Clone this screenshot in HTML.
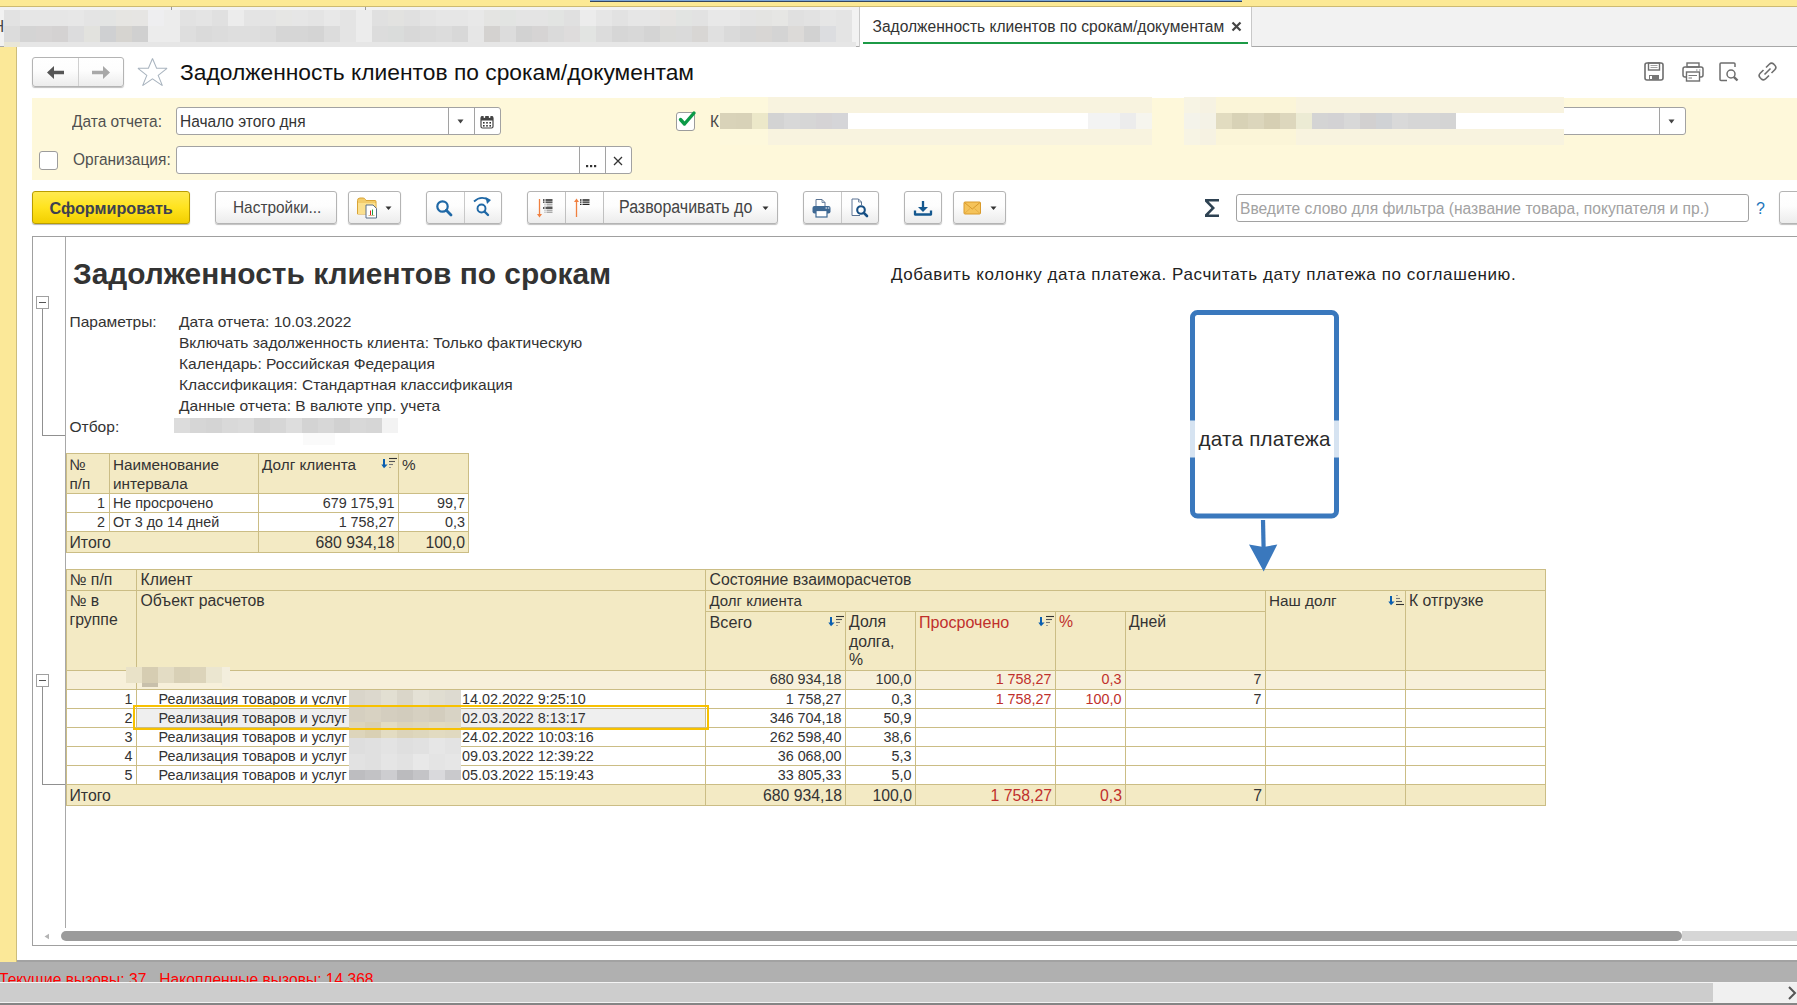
<!DOCTYPE html><html><head><meta charset="utf-8"><style>
html,body{margin:0;padding:0;}
body{width:1797px;height:1005px;position:relative;overflow:hidden;background:#fff;font-family:"Liberation Sans", sans-serif;}
.a{position:absolute;}
.t{position:absolute;white-space:nowrap;}
.btn{position:absolute;box-sizing:border-box;border:1px solid #b4b4b4;border-radius:3px;background:linear-gradient(#ffffff 0%,#fdfdfd 45%,#ececec 100%);box-shadow:0 1px 1px rgba(0,0,0,0.25);}
.inp{position:absolute;box-sizing:border-box;border:1px solid #a2a2a2;border-radius:3px;background:#fff;}
</style></head><body>
<div class="a" style="left:0px;top:0px;width:1797px;height:6px;background:#fce995;"></div>
<div class="a" style="left:0px;top:6px;width:1797px;height:1px;background:#cdba72;"></div>
<div class="a" style="left:590px;top:0px;width:652px;height:2px;background:#79a6da;border-bottom:1px solid #36465c;box-sizing:border-box;height:2px;"></div>
<div class="a" style="left:0px;top:7px;width:1797px;height:40px;background:#f2f2f2;"></div>
<div class="a" style="left:0px;top:46px;width:1797px;height:1px;background:#a8a8a8;"></div>
<div class="a" style="left:4px;top:10px;width:16px;height:16px;background:#e2e2e2;"></div>
<div class="a" style="left:4px;top:26px;width:16px;height:16px;background:#dcdcdc;"></div>
<div class="a" style="left:20px;top:10px;width:16px;height:16px;background:#e6e6e6;"></div>
<div class="a" style="left:20px;top:26px;width:16px;height:16px;background:#d4d4d4;"></div>
<div class="a" style="left:36px;top:10px;width:16px;height:16px;background:#e6e6e6;"></div>
<div class="a" style="left:36px;top:26px;width:16px;height:16px;background:#d6d4d4;"></div>
<div class="a" style="left:52px;top:10px;width:16px;height:16px;background:#e6e6e6;"></div>
<div class="a" style="left:52px;top:26px;width:16px;height:16px;background:#d4d2d2;"></div>
<div class="a" style="left:68px;top:10px;width:16px;height:16px;background:#e7e7e7;"></div>
<div class="a" style="left:68px;top:26px;width:16px;height:16px;background:#dcdcdd;"></div>
<div class="a" style="left:84px;top:10px;width:16px;height:16px;background:#e4e4e4;"></div>
<div class="a" style="left:84px;top:26px;width:16px;height:16px;background:#e2e2de;"></div>
<div class="a" style="left:100px;top:10px;width:16px;height:16px;background:#e3e4e3;"></div>
<div class="a" style="left:100px;top:26px;width:16px;height:16px;background:#cfd0d2;"></div>
<div class="a" style="left:116px;top:10px;width:16px;height:16px;background:#e6e5e2;"></div>
<div class="a" style="left:116px;top:26px;width:16px;height:16px;background:#d6d4d0;"></div>
<div class="a" style="left:132px;top:10px;width:16px;height:16px;background:#e6e5e3;"></div>
<div class="a" style="left:132px;top:26px;width:16px;height:16px;background:#d0d0d0;"></div>
<div class="a" style="left:148px;top:10px;width:16px;height:16px;background:#eeeef0;"></div>
<div class="a" style="left:148px;top:26px;width:16px;height:16px;background:#ececec;"></div>
<div class="a" style="left:164px;top:10px;width:16px;height:16px;background:#ececec;"></div>
<div class="a" style="left:164px;top:26px;width:16px;height:16px;background:#ececec;"></div>
<div class="a" style="left:180px;top:10px;width:16px;height:16px;background:#e2e2e2;"></div>
<div class="a" style="left:180px;top:26px;width:16px;height:16px;background:#dedede;"></div>
<div class="a" style="left:196px;top:10px;width:16px;height:16px;background:#e4e4e4;"></div>
<div class="a" style="left:196px;top:26px;width:16px;height:16px;background:#dadada;"></div>
<div class="a" style="left:212px;top:10px;width:16px;height:16px;background:#e0e0e0;"></div>
<div class="a" style="left:212px;top:26px;width:16px;height:16px;background:#dcdcdc;"></div>
<div class="a" style="left:228px;top:10px;width:16px;height:16px;background:#ececec;"></div>
<div class="a" style="left:228px;top:26px;width:16px;height:16px;background:#dedede;"></div>
<div class="a" style="left:244px;top:10px;width:16px;height:16px;background:#e4e4e4;"></div>
<div class="a" style="left:244px;top:26px;width:16px;height:16px;background:#dedede;"></div>
<div class="a" style="left:260px;top:10px;width:16px;height:16px;background:#e4e4e4;"></div>
<div class="a" style="left:260px;top:26px;width:16px;height:16px;background:#dcdcdc;"></div>
<div class="a" style="left:276px;top:10px;width:16px;height:16px;background:#e6e6e4;"></div>
<div class="a" style="left:276px;top:26px;width:16px;height:16px;background:#d6d6d6;"></div>
<div class="a" style="left:292px;top:10px;width:16px;height:16px;background:#e6e6e6;"></div>
<div class="a" style="left:292px;top:26px;width:16px;height:16px;background:#d6d6d6;"></div>
<div class="a" style="left:308px;top:10px;width:16px;height:16px;background:#e4e4e4;"></div>
<div class="a" style="left:308px;top:26px;width:16px;height:16px;background:#d4d4d4;"></div>
<div class="a" style="left:324px;top:10px;width:16px;height:16px;background:#e8e8e8;"></div>
<div class="a" style="left:324px;top:26px;width:16px;height:16px;background:#dcdcdc;"></div>
<div class="a" style="left:340px;top:10px;width:16px;height:16px;background:#e4e4e4;"></div>
<div class="a" style="left:340px;top:26px;width:16px;height:16px;background:#e4e4e4;"></div>
<div class="a" style="left:356px;top:10px;width:16px;height:16px;background:#ececec;"></div>
<div class="a" style="left:356px;top:26px;width:16px;height:16px;background:#ececec;"></div>
<div class="a" style="left:372px;top:10px;width:16px;height:16px;background:#e0e0e0;"></div>
<div class="a" style="left:372px;top:26px;width:16px;height:16px;background:#dcdcdc;"></div>
<div class="a" style="left:388px;top:10px;width:16px;height:16px;background:#e2e2e0;"></div>
<div class="a" style="left:388px;top:26px;width:16px;height:16px;background:#dadcdb;"></div>
<div class="a" style="left:404px;top:10px;width:16px;height:16px;background:#e0e0e0;"></div>
<div class="a" style="left:404px;top:26px;width:16px;height:16px;background:#d8d8d8;"></div>
<div class="a" style="left:420px;top:10px;width:16px;height:16px;background:#e4e4e4;"></div>
<div class="a" style="left:420px;top:26px;width:16px;height:16px;background:#dadada;"></div>
<div class="a" style="left:436px;top:10px;width:16px;height:16px;background:#e6e6e6;"></div>
<div class="a" style="left:436px;top:26px;width:16px;height:16px;background:#dcdcdc;"></div>
<div class="a" style="left:452px;top:10px;width:16px;height:16px;background:#e6e6e6;"></div>
<div class="a" style="left:452px;top:26px;width:16px;height:16px;background:#d8d8d8;"></div>
<div class="a" style="left:468px;top:10px;width:16px;height:16px;background:#e8e8e8;"></div>
<div class="a" style="left:468px;top:26px;width:16px;height:16px;background:#e6e6e6;"></div>
<div class="a" style="left:484px;top:10px;width:16px;height:16px;background:#e4e4e2;"></div>
<div class="a" style="left:484px;top:26px;width:16px;height:16px;background:#d4d2d0;"></div>
<div class="a" style="left:500px;top:10px;width:16px;height:16px;background:#e2e4e2;"></div>
<div class="a" style="left:500px;top:26px;width:16px;height:16px;background:#dcdcdc;"></div>
<div class="a" style="left:516px;top:10px;width:16px;height:16px;background:#e4e4e4;"></div>
<div class="a" style="left:516px;top:26px;width:16px;height:16px;background:#d2d2d2;"></div>
<div class="a" style="left:532px;top:10px;width:16px;height:16px;background:#e4e4e4;"></div>
<div class="a" style="left:532px;top:26px;width:16px;height:16px;background:#d6d4d4;"></div>
<div class="a" style="left:548px;top:10px;width:16px;height:16px;background:#e2e4e2;"></div>
<div class="a" style="left:548px;top:26px;width:16px;height:16px;background:#dadada;"></div>
<div class="a" style="left:564px;top:10px;width:16px;height:16px;background:#e0e0e0;"></div>
<div class="a" style="left:564px;top:26px;width:16px;height:16px;background:#dedcdc;"></div>
<div class="a" style="left:580px;top:10px;width:16px;height:16px;background:#ececec;"></div>
<div class="a" style="left:580px;top:26px;width:16px;height:16px;background:#e2e4e2;"></div>
<div class="a" style="left:596px;top:10px;width:16px;height:16px;background:#e6e6e6;"></div>
<div class="a" style="left:596px;top:26px;width:16px;height:16px;background:#dcdcdc;"></div>
<div class="a" style="left:612px;top:10px;width:16px;height:16px;background:#e2e2e2;"></div>
<div class="a" style="left:612px;top:26px;width:16px;height:16px;background:#d6d6d6;"></div>
<div class="a" style="left:628px;top:10px;width:16px;height:16px;background:#e6e6e6;"></div>
<div class="a" style="left:628px;top:26px;width:16px;height:16px;background:#d8d8d8;"></div>
<div class="a" style="left:644px;top:10px;width:16px;height:16px;background:#e6e6e6;"></div>
<div class="a" style="left:644px;top:26px;width:16px;height:16px;background:#d4d4d4;"></div>
<div class="a" style="left:660px;top:10px;width:16px;height:16px;background:#e6e4e2;"></div>
<div class="a" style="left:660px;top:26px;width:16px;height:16px;background:#dadad8;"></div>
<div class="a" style="left:676px;top:10px;width:16px;height:16px;background:#e2e4e2;"></div>
<div class="a" style="left:676px;top:26px;width:16px;height:16px;background:#dadada;"></div>
<div class="a" style="left:692px;top:10px;width:16px;height:16px;background:#e2e2e2;"></div>
<div class="a" style="left:692px;top:26px;width:16px;height:16px;background:#d8d6d4;"></div>
<div class="a" style="left:708px;top:10px;width:16px;height:16px;background:#e8e8e8;"></div>
<div class="a" style="left:708px;top:26px;width:16px;height:16px;background:#e0e0e0;"></div>
<div class="a" style="left:724px;top:10px;width:16px;height:16px;background:#e8e8e8;"></div>
<div class="a" style="left:724px;top:26px;width:16px;height:16px;background:#dadada;"></div>
<div class="a" style="left:740px;top:10px;width:16px;height:16px;background:#e4e4e4;"></div>
<div class="a" style="left:740px;top:26px;width:16px;height:16px;background:#d6d6d6;"></div>
<div class="a" style="left:756px;top:10px;width:16px;height:16px;background:#e4e4e2;"></div>
<div class="a" style="left:756px;top:26px;width:16px;height:16px;background:#d8d6d4;"></div>
<div class="a" style="left:772px;top:10px;width:16px;height:16px;background:#e6e6e4;"></div>
<div class="a" style="left:772px;top:26px;width:16px;height:16px;background:#d4d4d4;"></div>
<div class="a" style="left:788px;top:10px;width:16px;height:16px;background:#e0e0e0;"></div>
<div class="a" style="left:788px;top:26px;width:16px;height:16px;background:#dcdad8;"></div>
<div class="a" style="left:804px;top:10px;width:16px;height:16px;background:#e2e2e2;"></div>
<div class="a" style="left:804px;top:26px;width:16px;height:16px;background:#d2d2d2;"></div>
<div class="a" style="left:820px;top:10px;width:16px;height:16px;background:#e6e6e6;"></div>
<div class="a" style="left:820px;top:26px;width:16px;height:16px;background:#dcdde0;"></div>
<div class="a" style="left:836px;top:10px;width:16px;height:16px;background:#e4e4e4;"></div>
<div class="a" style="left:836px;top:26px;width:16px;height:16px;background:#e4e4e4;"></div>
<div class="a" style="left:4px;top:42px;width:852px;height:5px;background:#e6e6e6;"></div>
<div class="a" style="left:4px;top:42px;width:16px;height:5px;background:#e8e6d8;"></div>
<div class="a" style="left:171px;top:7px;width:1px;height:3px;background:#999;"></div>
<div class="a" style="left:365px;top:7px;width:1px;height:3px;background:#999;"></div>
<div class="t" style="top:15.59px;font-size:17.05px;line-height:21px;color:#444;left:-7.5px;transform:scaleX(0.9091);transform-origin:0 0;">Н</div>
<div class="a" style="left:859px;top:7px;width:393px;height:40px;background:#fff;border-left:1px solid #c8c8c8;border-right:1px solid #c8c8c8;box-sizing:border-box;"></div>
<div class="a" style="left:863px;top:42px;width:385px;height:2px;background:#1c9a46;"></div>
<div class="t" style="top:16.59px;font-size:15.60px;line-height:20px;color:#333;left:872.5px;">Задолженность клиентов по срокам/документам</div>
<svg class="a" style="left:1231px;top:21px;" width="11" height="11" viewBox="0 0 11 11"><path d="M1.5 1.5 L9.5 9.5 M9.5 1.5 L1.5 9.5" stroke="#444" stroke-width="2.2" stroke-linecap="butt"/></svg>
<div class="a" style="left:0px;top:47px;width:17px;height:916px;background:#fbe898;border-right:1px solid #cdbd7c;box-sizing:border-box;"></div>
<div class="btn" style="left:32px;top:57px;width:92px;height:30px;"></div>
<div class="a" style="left:78px;top:58px;width:1px;height:28px;background:#d0d0d0;"></div>
<svg class="a" style="left:46px;top:65px;" width="20" height="15" viewBox="0 0 20 15"><path d="M1 7.5 L8 1 L8 5.8 L18 5.8 L18 9.2 L8 9.2 L8 14 Z" fill="#555"/></svg>
<svg class="a" style="left:91px;top:65px;" width="20" height="15" viewBox="0 0 20 15"><path d="M19 7.5 L12 1 L12 5.8 L1 5.8 L1 9.2 L12 9.2 L12 14 Z" fill="#a8a8a8"/></svg>
<svg class="a" style="left:136px;top:57px;" width="32" height="30" viewBox="0 0 32 30"><path d="M16.5 1.5 L20.6 11.3 L31 11.3 L22.2 18.4 L26.4 28.6 L16.5 21.8 L6.6 28.6 L10.8 18.4 L2 11.3 L12.4 11.3 Z" fill="none" stroke="#a9b4bf" stroke-width="1.05" stroke-linejoin="miter" stroke-miterlimit="2.5"/></svg>
<div class="t" style="top:57.60px;font-size:22.80px;line-height:28px;color:#111;left:180px;">Задолженность клиентов по срокам/документам</div>
<svg class="a" style="left:1644px;top:62px;" width="21" height="19" viewBox="0 0 21 19"><rect x="1" y="1" width="18" height="17" rx="2" fill="none" stroke="#6e6e6e" stroke-width="1.6"/><rect x="4.5" y="1" width="11" height="7" fill="none" stroke="#6e6e6e" stroke-width="1.4"/><path d="M6.5 3.5 H13.5 M6.5 5.5 H13.5" stroke="#999" stroke-width="0.9"/><rect x="5" y="13" width="10" height="5" fill="#777"/><rect x="6" y="14" width="2" height="3" fill="#fff"/></svg>
<svg class="a" style="left:1682px;top:62px;" width="22" height="20" viewBox="0 0 22 20"><rect x="5" y="1" width="12" height="4" fill="none" stroke="#6e6e6e" stroke-width="1.4"/><rect x="1" y="5" width="20" height="10" rx="2" fill="none" stroke="#6e6e6e" stroke-width="1.5"/><rect x="4.5" y="10" width="13" height="9" fill="#fff" stroke="#6e6e6e" stroke-width="1.4"/><path d="M6.5 13.5 H15 M6.5 16 H10" stroke="#777" stroke-width="1"/><path d="M14 8 H15.5 M17 8 H18.5" stroke="#888" stroke-width="1"/></svg>
<svg class="a" style="left:1719px;top:62px;" width="21" height="20" viewBox="0 0 21 20"><path d="M8 18.5 H2 Q1 18.5 1 17.5 V2 Q1 1 2 1 H15 Q16 1 16 2 V5" fill="none" stroke="#6e6e6e" stroke-width="1.5"/><circle cx="12" cy="12" r="4" fill="none" stroke="#6e6e6e" stroke-width="1.5"/><path d="M14.8 14.8 L18.5 18.5" stroke="#6e6e6e" stroke-width="2.4"/></svg>
<svg class="a" style="left:1757px;top:61px;" width="21" height="21" viewBox="0 0 21 21"><path d="M9 6.5 L12.3 3.2 Q14.5 1 16.8 3.2 L17.8 4.2 Q20 6.5 17.8 8.7 L14.5 12" fill="none" stroke="#6e6e6e" stroke-width="1.6"/><path d="M12 14.5 L8.7 17.8 Q6.5 20 4.2 17.8 L3.2 16.8 Q1 14.5 3.2 12.3 L6.5 9" fill="none" stroke="#6e6e6e" stroke-width="1.6"/><path d="M7.5 13.5 L13.5 7.5" stroke="#6e6e6e" stroke-width="1.6"/></svg>
<div class="a" style="left:32px;top:98px;width:1765px;height:82px;background:#fef8da;"></div>
<div class="t" style="top:110.59px;font-size:17.05px;line-height:21px;color:#505050;left:72px;transform:scaleX(0.9091);transform-origin:0 0;">Дата отчета:</div>
<div class="inp" style="left:176px;top:107px;width:325px;height:28px;"></div>
<div class="a" style="left:448px;top:108px;width:1px;height:26px;background:#a2a2a2;"></div>
<div class="a" style="left:474px;top:108px;width:1px;height:26px;background:#a2a2a2;"></div>
<div class="t" style="top:110.59px;font-size:17.05px;line-height:21px;color:#333;left:180px;transform:scaleX(0.9091);transform-origin:0 0;">Начало этого дня</div>
<svg class="a" style="left:457px;top:119px;" width="8" height="5" viewBox="0 0 8 5"><path d="M0.5 0.5 H6.5 L3.5 4.5 Z" fill="#444"/></svg>
<svg class="a" style="left:480px;top:114px;" width="14" height="15" viewBox="0 0 14 15"><rect x="1" y="2.5" width="12" height="11.5" rx="1.5" fill="#fff" stroke="#444" stroke-width="1.2"/><rect x="1" y="2.5" width="12" height="4" fill="#444"/><rect x="3.6" y="1" width="1.6" height="3" rx="0.8" fill="#fff"/><rect x="8.8" y="1" width="1.6" height="3" rx="0.8" fill="#fff"/><g fill="#333"><rect x="3" y="8" width="1.6" height="1.6"/><rect x="6.2" y="8" width="1.6" height="1.6"/><rect x="9.4" y="8" width="1.6" height="1.6"/><rect x="3" y="11" width="1.6" height="1.6"/><rect x="6.2" y="11" width="1.6" height="1.6"/><rect x="9.4" y="11" width="1.6" height="1.6"/></g></svg>
<div class="inp" style="left:39px;top:151px;width:19px;height:19px;border-radius:3px;border-color:#9c9c9c;"></div>
<div class="t" style="top:149.09px;font-size:17.05px;line-height:21px;color:#505050;left:72.5px;transform:scaleX(0.9091);transform-origin:0 0;">Организация:</div>
<div class="inp" style="left:176px;top:146px;width:456px;height:28px;"></div>
<div class="a" style="left:579px;top:147px;width:1px;height:26px;background:#a2a2a2;"></div>
<div class="a" style="left:605px;top:147px;width:1px;height:26px;background:#a2a2a2;"></div>
<svg class="a" style="left:585px;top:164px;" width="14" height="4" viewBox="0 0 14 4"><rect x="1" y="1" width="2.2" height="2.2" fill="#333"/><rect x="5" y="1" width="2.2" height="2.2" fill="#333"/><rect x="9" y="1" width="2.2" height="2.2" fill="#333"/></svg>
<svg class="a" style="left:612px;top:155px;" width="12" height="12" viewBox="0 0 12 12"><path d="M2 2 L10 10 M10 2 L2 10" stroke="#333" stroke-width="1.3"/></svg>
<div class="inp" style="left:676px;top:112px;width:19px;height:19px;border-radius:3px;border-color:#9c9c9c;"></div>
<svg class="a" style="left:677px;top:109px;" width="20" height="18" viewBox="0 0 20 18"><path d="M3.5 10.5 L7.5 15 L17 4" fill="none" stroke="#0b9a47" stroke-width="3.4" stroke-linecap="round" stroke-linejoin="round"/></svg>
<div class="t" style="top:110.59px;font-size:17.05px;line-height:21px;color:#4a4a4a;left:709.5px;transform:scaleX(0.9091);transform-origin:0 0;">К</div>
<div class="inp" style="left:1400px;top:107px;width:286px;height:28px;"></div>
<div class="a" style="left:1659px;top:108px;width:1px;height:26px;background:#a2a2a2;"></div>
<svg class="a" style="left:1668px;top:119px;" width="8" height="5" viewBox="0 0 8 5"><path d="M0.5 0.5 H6.5 L3.5 4.5 Z" fill="#444"/></svg>
<div class="a" style="left:720px;top:97px;width:16px;height:16px;background:#fdf8dc;"></div>
<div class="a" style="left:736px;top:97px;width:16px;height:16px;background:#fdf8dc;"></div>
<div class="a" style="left:752px;top:97px;width:16px;height:16px;background:#fdf8dc;"></div>
<div class="a" style="left:768px;top:97px;width:16px;height:16px;background:#f8f3df;"></div>
<div class="a" style="left:784px;top:97px;width:16px;height:16px;background:#f8f3df;"></div>
<div class="a" style="left:800px;top:97px;width:16px;height:16px;background:#f8f3df;"></div>
<div class="a" style="left:816px;top:97px;width:16px;height:16px;background:#f8f3df;"></div>
<div class="a" style="left:832px;top:97px;width:16px;height:16px;background:#f8f3df;"></div>
<div class="a" style="left:848px;top:97px;width:16px;height:16px;background:#f8f3df;"></div>
<div class="a" style="left:864px;top:97px;width:16px;height:16px;background:#f8f3df;"></div>
<div class="a" style="left:880px;top:97px;width:16px;height:16px;background:#f8f3df;"></div>
<div class="a" style="left:896px;top:97px;width:16px;height:16px;background:#f8f3df;"></div>
<div class="a" style="left:912px;top:97px;width:16px;height:16px;background:#f8f3df;"></div>
<div class="a" style="left:928px;top:97px;width:16px;height:16px;background:#f8f3df;"></div>
<div class="a" style="left:944px;top:97px;width:16px;height:16px;background:#f8f3df;"></div>
<div class="a" style="left:960px;top:97px;width:16px;height:16px;background:#f8f3df;"></div>
<div class="a" style="left:976px;top:97px;width:16px;height:16px;background:#f8f3df;"></div>
<div class="a" style="left:992px;top:97px;width:16px;height:16px;background:#f8f3df;"></div>
<div class="a" style="left:1008px;top:97px;width:16px;height:16px;background:#f8f3df;"></div>
<div class="a" style="left:1024px;top:97px;width:16px;height:16px;background:#f8f3df;"></div>
<div class="a" style="left:1040px;top:97px;width:16px;height:16px;background:#f8f3df;"></div>
<div class="a" style="left:1056px;top:97px;width:16px;height:16px;background:#f8f3df;"></div>
<div class="a" style="left:1072px;top:97px;width:16px;height:16px;background:#f8f3df;"></div>
<div class="a" style="left:1088px;top:97px;width:16px;height:16px;background:#f8f3df;"></div>
<div class="a" style="left:1104px;top:97px;width:16px;height:16px;background:#f8f3df;"></div>
<div class="a" style="left:1120px;top:97px;width:16px;height:16px;background:#f8f3df;"></div>
<div class="a" style="left:1136px;top:97px;width:16px;height:16px;background:#f8f3df;"></div>
<div class="a" style="left:720px;top:129px;width:16px;height:16px;background:#fdf8dc;"></div>
<div class="a" style="left:736px;top:129px;width:16px;height:16px;background:#fdf8dc;"></div>
<div class="a" style="left:752px;top:129px;width:16px;height:16px;background:#fdf8dc;"></div>
<div class="a" style="left:768px;top:129px;width:16px;height:16px;background:#f8f3df;"></div>
<div class="a" style="left:784px;top:129px;width:16px;height:16px;background:#f8f3df;"></div>
<div class="a" style="left:800px;top:129px;width:16px;height:16px;background:#f8f3df;"></div>
<div class="a" style="left:816px;top:129px;width:16px;height:16px;background:#f8f3df;"></div>
<div class="a" style="left:832px;top:129px;width:16px;height:16px;background:#f8f3df;"></div>
<div class="a" style="left:848px;top:129px;width:16px;height:16px;background:#f8f3df;"></div>
<div class="a" style="left:864px;top:129px;width:16px;height:16px;background:#f8f3df;"></div>
<div class="a" style="left:880px;top:129px;width:16px;height:16px;background:#f8f3df;"></div>
<div class="a" style="left:896px;top:129px;width:16px;height:16px;background:#f8f3df;"></div>
<div class="a" style="left:912px;top:129px;width:16px;height:16px;background:#f8f3df;"></div>
<div class="a" style="left:928px;top:129px;width:16px;height:16px;background:#f8f3df;"></div>
<div class="a" style="left:944px;top:129px;width:16px;height:16px;background:#f8f3df;"></div>
<div class="a" style="left:960px;top:129px;width:16px;height:16px;background:#f8f3df;"></div>
<div class="a" style="left:976px;top:129px;width:16px;height:16px;background:#f8f3df;"></div>
<div class="a" style="left:992px;top:129px;width:16px;height:16px;background:#f8f3df;"></div>
<div class="a" style="left:1008px;top:129px;width:16px;height:16px;background:#f8f3df;"></div>
<div class="a" style="left:1024px;top:129px;width:16px;height:16px;background:#f8f3df;"></div>
<div class="a" style="left:1040px;top:129px;width:16px;height:16px;background:#f8f3df;"></div>
<div class="a" style="left:1056px;top:129px;width:16px;height:16px;background:#f8f3df;"></div>
<div class="a" style="left:1072px;top:129px;width:16px;height:16px;background:#f8f3df;"></div>
<div class="a" style="left:1088px;top:129px;width:16px;height:16px;background:#f8f3df;"></div>
<div class="a" style="left:1104px;top:129px;width:16px;height:16px;background:#f8f3df;"></div>
<div class="a" style="left:1120px;top:129px;width:16px;height:16px;background:#f8f3df;"></div>
<div class="a" style="left:1136px;top:129px;width:16px;height:16px;background:#f8f3df;"></div>
<div class="a" style="left:720px;top:113px;width:16px;height:16px;background:#d9d3b9;"></div>
<div class="a" style="left:736px;top:113px;width:16px;height:16px;background:#d8d2b8;"></div>
<div class="a" style="left:752px;top:113px;width:16px;height:16px;background:#ece8c9;"></div>
<div class="a" style="left:768px;top:113px;width:16px;height:16px;background:#d3d3d3;"></div>
<div class="a" style="left:784px;top:113px;width:16px;height:16px;background:#d8d8d8;"></div>
<div class="a" style="left:800px;top:113px;width:16px;height:16px;background:#d6d6d6;"></div>
<div class="a" style="left:816px;top:113px;width:16px;height:16px;background:#d5d3d5;"></div>
<div class="a" style="left:832px;top:113px;width:16px;height:16px;background:#d5d5d8;"></div>
<div class="a" style="left:848px;top:113px;width:16px;height:16px;background:#ffffff;"></div>
<div class="a" style="left:864px;top:113px;width:16px;height:16px;background:#ffffff;"></div>
<div class="a" style="left:880px;top:113px;width:16px;height:16px;background:#ffffff;"></div>
<div class="a" style="left:896px;top:113px;width:16px;height:16px;background:#ffffff;"></div>
<div class="a" style="left:912px;top:113px;width:16px;height:16px;background:#ffffff;"></div>
<div class="a" style="left:928px;top:113px;width:16px;height:16px;background:#ffffff;"></div>
<div class="a" style="left:944px;top:113px;width:16px;height:16px;background:#ffffff;"></div>
<div class="a" style="left:960px;top:113px;width:16px;height:16px;background:#ffffff;"></div>
<div class="a" style="left:976px;top:113px;width:16px;height:16px;background:#ffffff;"></div>
<div class="a" style="left:992px;top:113px;width:16px;height:16px;background:#ffffff;"></div>
<div class="a" style="left:1008px;top:113px;width:16px;height:16px;background:#ffffff;"></div>
<div class="a" style="left:1024px;top:113px;width:16px;height:16px;background:#ffffff;"></div>
<div class="a" style="left:1040px;top:113px;width:16px;height:16px;background:#ffffff;"></div>
<div class="a" style="left:1056px;top:113px;width:16px;height:16px;background:#ffffff;"></div>
<div class="a" style="left:1072px;top:113px;width:16px;height:16px;background:#ffffff;"></div>
<div class="a" style="left:1088px;top:113px;width:16px;height:16px;background:#f3f3f3;"></div>
<div class="a" style="left:1104px;top:113px;width:16px;height:16px;background:#f3f3f3;"></div>
<div class="a" style="left:1120px;top:113px;width:16px;height:16px;background:#ececec;"></div>
<div class="a" style="left:1136px;top:113px;width:16px;height:16px;background:#f6f5ee;"></div>
<div class="a" style="left:1184px;top:97px;width:16px;height:16px;background:#f7f4e4;"></div>
<div class="a" style="left:1200px;top:97px;width:16px;height:16px;background:#f6f2e2;"></div>
<div class="a" style="left:1216px;top:97px;width:16px;height:16px;background:#fbf5d8;"></div>
<div class="a" style="left:1232px;top:97px;width:16px;height:16px;background:#fbf5d8;"></div>
<div class="a" style="left:1248px;top:97px;width:16px;height:16px;background:#fbf5d8;"></div>
<div class="a" style="left:1264px;top:97px;width:16px;height:16px;background:#fbf5d8;"></div>
<div class="a" style="left:1280px;top:97px;width:16px;height:16px;background:#fbf5d8;"></div>
<div class="a" style="left:1296px;top:97px;width:16px;height:16px;background:#f8f3df;"></div>
<div class="a" style="left:1312px;top:97px;width:16px;height:16px;background:#f8f3df;"></div>
<div class="a" style="left:1328px;top:97px;width:16px;height:16px;background:#f8f3df;"></div>
<div class="a" style="left:1344px;top:97px;width:16px;height:16px;background:#f8f3df;"></div>
<div class="a" style="left:1360px;top:97px;width:16px;height:16px;background:#f8f3df;"></div>
<div class="a" style="left:1376px;top:97px;width:16px;height:16px;background:#f8f3df;"></div>
<div class="a" style="left:1392px;top:97px;width:16px;height:16px;background:#f8f3df;"></div>
<div class="a" style="left:1408px;top:97px;width:16px;height:16px;background:#f8f3df;"></div>
<div class="a" style="left:1424px;top:97px;width:16px;height:16px;background:#f8f3df;"></div>
<div class="a" style="left:1440px;top:97px;width:16px;height:16px;background:#f8f3df;"></div>
<div class="a" style="left:1456px;top:97px;width:16px;height:16px;background:#f8f3df;"></div>
<div class="a" style="left:1472px;top:97px;width:16px;height:16px;background:#f8f3df;"></div>
<div class="a" style="left:1488px;top:97px;width:16px;height:16px;background:#f8f3df;"></div>
<div class="a" style="left:1504px;top:97px;width:16px;height:16px;background:#f8f3df;"></div>
<div class="a" style="left:1520px;top:97px;width:16px;height:16px;background:#f8f3df;"></div>
<div class="a" style="left:1536px;top:97px;width:16px;height:16px;background:#f8f3df;"></div>
<div class="a" style="left:1552px;top:97px;width:12px;height:16px;background:#f8f3df;"></div>
<div class="a" style="left:1184px;top:129px;width:16px;height:16px;background:#f7f4e4;"></div>
<div class="a" style="left:1200px;top:129px;width:16px;height:16px;background:#f6f2e2;"></div>
<div class="a" style="left:1216px;top:129px;width:16px;height:16px;background:#fbf5d8;"></div>
<div class="a" style="left:1232px;top:129px;width:16px;height:16px;background:#fbf5d8;"></div>
<div class="a" style="left:1248px;top:129px;width:16px;height:16px;background:#fbf5d8;"></div>
<div class="a" style="left:1264px;top:129px;width:16px;height:16px;background:#fbf5d8;"></div>
<div class="a" style="left:1280px;top:129px;width:16px;height:16px;background:#fbf5d8;"></div>
<div class="a" style="left:1296px;top:129px;width:16px;height:16px;background:#f8f3df;"></div>
<div class="a" style="left:1312px;top:129px;width:16px;height:16px;background:#f8f3df;"></div>
<div class="a" style="left:1328px;top:129px;width:16px;height:16px;background:#f8f3df;"></div>
<div class="a" style="left:1344px;top:129px;width:16px;height:16px;background:#f8f3df;"></div>
<div class="a" style="left:1360px;top:129px;width:16px;height:16px;background:#f8f3df;"></div>
<div class="a" style="left:1376px;top:129px;width:16px;height:16px;background:#f8f3df;"></div>
<div class="a" style="left:1392px;top:129px;width:16px;height:16px;background:#f8f3df;"></div>
<div class="a" style="left:1408px;top:129px;width:16px;height:16px;background:#f8f3df;"></div>
<div class="a" style="left:1424px;top:129px;width:16px;height:16px;background:#f8f3df;"></div>
<div class="a" style="left:1440px;top:129px;width:16px;height:16px;background:#f8f3df;"></div>
<div class="a" style="left:1456px;top:129px;width:16px;height:16px;background:#f8f3df;"></div>
<div class="a" style="left:1472px;top:129px;width:16px;height:16px;background:#f8f3df;"></div>
<div class="a" style="left:1488px;top:129px;width:16px;height:16px;background:#f8f3df;"></div>
<div class="a" style="left:1504px;top:129px;width:16px;height:16px;background:#f8f3df;"></div>
<div class="a" style="left:1520px;top:129px;width:16px;height:16px;background:#f8f3df;"></div>
<div class="a" style="left:1536px;top:129px;width:16px;height:16px;background:#f8f3df;"></div>
<div class="a" style="left:1552px;top:129px;width:12px;height:16px;background:#f8f3df;"></div>
<div class="a" style="left:1184px;top:113px;width:16px;height:16px;background:#f4f3ea;"></div>
<div class="a" style="left:1200px;top:113px;width:16px;height:16px;background:#f4f2e6;"></div>
<div class="a" style="left:1216px;top:113px;width:16px;height:16px;background:#e2dcc0;"></div>
<div class="a" style="left:1232px;top:113px;width:16px;height:16px;background:#d8d2b6;"></div>
<div class="a" style="left:1248px;top:113px;width:16px;height:16px;background:#dcd6bc;"></div>
<div class="a" style="left:1264px;top:113px;width:16px;height:16px;background:#d6cfb3;"></div>
<div class="a" style="left:1280px;top:113px;width:16px;height:16px;background:#ddd7bd;"></div>
<div class="a" style="left:1296px;top:113px;width:16px;height:16px;background:#ecebd4;"></div>
<div class="a" style="left:1312px;top:113px;width:16px;height:16px;background:#d4d4d4;"></div>
<div class="a" style="left:1328px;top:113px;width:16px;height:16px;background:#d3d2d4;"></div>
<div class="a" style="left:1344px;top:113px;width:16px;height:16px;background:#d8d8d8;"></div>
<div class="a" style="left:1360px;top:113px;width:16px;height:16px;background:#d2d0d0;"></div>
<div class="a" style="left:1376px;top:113px;width:16px;height:16px;background:#d0d2d5;"></div>
<div class="a" style="left:1392px;top:113px;width:16px;height:16px;background:#d9d9d9;"></div>
<div class="a" style="left:1408px;top:113px;width:16px;height:16px;background:#d6d6d6;"></div>
<div class="a" style="left:1424px;top:113px;width:16px;height:16px;background:#d6d6d6;"></div>
<div class="a" style="left:1440px;top:113px;width:16px;height:16px;background:#d4d4d4;"></div>
<div class="a" style="left:1456px;top:113px;width:108px;height:16px;background:#fff;"></div>
<div class="a" style="left:32px;top:191px;width:158px;height:33px;box-sizing:border-box;border:1px solid #b99d00;border-radius:3px;background:linear-gradient(#ffea50 0%,#ffe31e 50%,#f2cf00 100%);box-shadow:0 1px 1px rgba(0,0,0,0.3);"></div>
<div class="t" style="top:198.19px;font-size:16.20px;line-height:20px;color:#3d4150;font-weight:bold;left:49.5px;">Сформировать</div>
<div class="btn" style="left:215px;top:191px;width:122px;height:33px;"></div>
<div class="t" style="top:196.63px;font-size:16.94px;line-height:21px;color:#444;left:232.5px;transform:scaleX(0.9091);transform-origin:0 0;">Настройки...</div>
<div class="btn" style="left:348px;top:191px;width:53px;height:33px;"></div>
<svg class="a" style="left:356px;top:197px;" width="23" height="22" viewBox="0 0 23 22"><path d="M1.5 3.5 Q1.5 1 4 1 L7 1 Q8.5 1 9.5 2.5 L10 3.5 L19 3.5 Q20 3.5 20 4.5 L20 17 L1.5 17 Z" fill="#f3cc6a" stroke="#d9a437" stroke-width="1"/><rect x="2" y="6" width="17.5" height="11" fill="#fbe08f"/><path d="M10 8 L17 8 L20.5 11.5 L20.5 21 L10 21 Z" fill="#fff" stroke="#5a6f88" stroke-width="1"/><path d="M12.5 18.5 H18.5" stroke="#b84" stroke-width="0.6"/><path d="M14.5 18 V13.5" stroke="#e02020" stroke-width="1"/><path d="M16.5 18 V12.5" stroke="#20a040" stroke-width="1"/></svg>
<svg class="a" style="left:385px;top:206px;" width="8" height="5" viewBox="0 0 8 5"><path d="M0.5 0.5 H6.5 L3.5 4 Z" fill="#333"/></svg>
<div class="btn" style="left:426px;top:191px;width:76px;height:33px;"></div>
<div class="a" style="left:464px;top:192px;width:1px;height:31px;background:#c8c8c8;"></div>
<svg class="a" style="left:434px;top:198px;" width="20" height="20" viewBox="0 0 20 20"><circle cx="8.5" cy="8.5" r="5.2" fill="none" stroke="#1f68a6" stroke-width="2.2"/><path d="M12.3 12.3 L17 17" stroke="#1f68a6" stroke-width="2.8" stroke-linecap="round"/></svg>
<svg class="a" style="left:472px;top:196px;" width="22" height="22" viewBox="0 0 22 22"><path d="M2 5.5 Q9 -1 16.5 4" fill="none" stroke="#1f68a6" stroke-width="1.8"/><path d="M13.5 1 L19 4 L15 8 Z" fill="#1f68a6"/><circle cx="9.5" cy="12.5" r="4" fill="none" stroke="#1f68a6" stroke-width="1.9"/><path d="M12.5 15.5 L16 19" stroke="#1f68a6" stroke-width="2.4" stroke-linecap="round"/></svg>
<div class="btn" style="left:527px;top:191px;width:251px;height:33px;"></div>
<div class="a" style="left:565px;top:192px;width:1px;height:31px;background:#c0c0c0;"></div>
<div class="a" style="left:603px;top:192px;width:1px;height:31px;background:#c0c0c0;"></div>
<svg class="a" style="left:533px;top:196px;" width="26" height="24" viewBox="0 0 26 24"><path d="M6.5 3 V19" stroke="#f08040" stroke-width="1.3"/><path d="M4 18 L9 18 L6.5 21.5 Z" fill="#f08040"/><g stroke="#222" stroke-width="1.3"><path d="M10 4 H11.5 M12.5 4 H19.5 M10 6.2 H11.5 M12.5 6.2 H19.5 M10 12 H11.5 M12.5 12 H19.5"/></g><g stroke="#888" stroke-width="1"><path d="M11.5 8.2 H12.5 M13.5 8.2 H19.5 M11.5 10.2 H12.5 M13.5 10.2 H19.5 M11.5 14.2 H12.5 M13.5 14.2 H19.5 M11.5 16.2 H12.5 M13.5 16.2 H19.5"/></g></svg>
<svg class="a" style="left:571px;top:196px;" width="26" height="24" viewBox="0 0 26 24"><path d="M5.5 5 V21" stroke="#f08040" stroke-width="1.3"/><path d="M3 6 L8 6 L5.5 2.5 Z" fill="#f08040"/><g stroke="#222" stroke-width="1.3"><path d="M9 4 H10.5 M11.5 4 H18.5 M9 6.2 H10.5 M11.5 6.2 H18.5 M9 8.3 H10.5 M11.5 8.3 H18.5"/></g></svg>
<div class="t" style="top:195.90px;font-size:17.60px;line-height:22px;color:#444;left:619px;transform:scaleX(0.9091);transform-origin:0 0;">Разворачивать до</div>
<svg class="a" style="left:762px;top:206px;" width="8" height="5" viewBox="0 0 8 5"><path d="M0.5 0.5 H6.5 L3.5 4 Z" fill="#333"/></svg>
<div class="btn" style="left:803px;top:191px;width:76px;height:33px;"></div>
<div class="a" style="left:841px;top:192px;width:1px;height:31px;background:#c8c8c8;"></div>
<svg class="a" style="left:811px;top:198px;" width="22" height="20" viewBox="0 0 22 20"><path d="M5 8 V1.5 H11 L14 4.5 V8" fill="#fff" stroke="#5a7393" stroke-width="1" stroke-linejoin="miter"/><path d="M11 1.5 V4.5 H14" fill="none" stroke="#5a7393" stroke-width="0.8"/><rect x="1.5" y="8" width="18" height="7.5" rx="2" fill="#3f6994"/><rect x="5" y="12.5" width="11" height="6.5" fill="#fff" stroke="#3f6994" stroke-width="1.2"/><rect x="14.5" y="9.5" width="1.5" height="1" fill="#fff"/><rect x="16.8" y="9.5" width="1.5" height="1" fill="#fff"/></svg>
<svg class="a" style="left:850px;top:198px;" width="20" height="20" viewBox="0 0 20 20"><path d="M10 17.5 H2 V1 H8.5 L11.5 4 V7" fill="#fff" stroke="#5a7393" stroke-width="1" stroke-linejoin="miter"/><path d="M8.5 1 V4 H11.5" fill="none" stroke="#5a7393" stroke-width="0.8"/><circle cx="11" cy="12" r="3.8" fill="none" stroke="#164f84" stroke-width="2.1"/><path d="M13.8 14.8 L17 18" stroke="#164f84" stroke-width="2.6" stroke-linecap="round"/></svg>
<div class="btn" style="left:904px;top:191px;width:38px;height:33px;"></div>
<svg class="a" style="left:913px;top:200px;" width="20" height="17" viewBox="0 0 20 17"><path d="M10 1 V10" stroke="#15588f" stroke-width="2.3"/><path d="M5 7 L15 7 L10 12 Z" fill="#15588f"/><path d="M2 10.5 V14.5 H18 V10.5" fill="none" stroke="#15588f" stroke-width="2.3" stroke-linejoin="round"/></svg>
<div class="btn" style="left:953px;top:191px;width:53px;height:33px;"></div>
<svg class="a" style="left:963px;top:201px;" width="19" height="14" viewBox="0 0 19 14"><rect x="1" y="1" width="16.5" height="12" rx="1" fill="#f5c35a" stroke="#d99a2b" stroke-width="1"/><path d="M1.5 1.5 L9.25 8 L17 1.5" fill="none" stroke="#d99a2b" stroke-width="1"/><path d="M1.5 12.5 L7 7.5 M17 12.5 L11.5 7.5" stroke="#e0a840" stroke-width="0.8"/></svg>
<svg class="a" style="left:990px;top:206px;" width="8" height="5" viewBox="0 0 8 5"><path d="M0.5 0.5 H6.5 L3.5 4 Z" fill="#333"/></svg>
<svg class="a" style="left:1204px;top:198px;" width="16" height="20" viewBox="0 0 16 20"><path d="M1 1 H15 V3.5 H4.6 L11 10 L4.6 16.5 H15 V19 H1 V16.6 L7.4 10 L1 3.4 Z" fill="#2e4252"/></svg>
<div class="inp" style="left:1236px;top:194px;width:513px;height:28px;"></div>
<div class="t" style="top:199.09px;font-size:15.60px;line-height:20px;color:#a2a2a2;left:1240px;">Введите слово для фильтра (название товара, покупателя и пр.)</div>
<div class="t" style="top:199.46px;font-size:16.00px;line-height:20px;color:#1b75bb;left:1756px;">?</div>
<div class="btn" style="left:1779px;top:191px;width:40px;height:33px;"></div>
<div class="a" style="left:32px;top:236px;width:1765px;height:710px;box-sizing:border-box;border:1px solid #a0a0a0;border-right:none;"></div>
<div class="a" style="left:65px;top:237px;width:1px;height:691px;background:#a8a8a8;"></div>
<div class="a" style="left:36px;top:296px;width:13px;height:13px;box-sizing:border-box;border:1px solid #a0a0a0;background:#fff;"></div>
<div class="a" style="left:39px;top:302px;width:7px;height:1px;background:#555;"></div>
<div class="a" style="left:42px;top:309px;width:1px;height:127px;background:#909090;"></div>
<div class="a" style="left:42px;top:435px;width:23px;height:1px;background:#909090;"></div>
<div class="t" style="top:254.64px;font-size:29.90px;line-height:37px;color:#333;font-weight:bold;left:73px;">Задолженность клиентов по срокам</div>
<div class="t" style="top:264.31px;font-size:17.00px;line-height:21px;color:#222;letter-spacing:0.6px;left:891px;">Добавить колонку дата платежа. Расчитать дату платежа по соглашению.</div>
<div class="t" style="top:312.41px;font-size:15.55px;line-height:19px;color:#333;left:69.5px;">Параметры:</div>
<div class="t" style="top:312.41px;font-size:15.55px;line-height:19px;color:#333;left:179px;">Дата отчета: 10.03.2022</div>
<div class="t" style="top:333.11px;font-size:15.55px;line-height:19px;color:#333;left:179px;">Включать задолженность клиента: Только фактическую</div>
<div class="t" style="top:353.91px;font-size:15.55px;line-height:19px;color:#333;left:179px;">Календарь: Российская Федерация</div>
<div class="t" style="top:374.71px;font-size:15.55px;line-height:19px;color:#333;left:179px;">Классификация: Стандартная классификация</div>
<div class="t" style="top:395.51px;font-size:15.55px;line-height:19px;color:#333;left:179px;">Данные отчета: В валюте упр. учета</div>
<div class="t" style="top:416.51px;font-size:15.55px;line-height:19px;color:#333;left:69.5px;">Отбор:</div>
<div class="a" style="left:174px;top:418px;width:16px;height:15px;background:#dcdcdc;"></div>
<div class="a" style="left:190px;top:418px;width:16px;height:15px;background:#d6d6d6;"></div>
<div class="a" style="left:206px;top:418px;width:16px;height:15px;background:#d4d4d4;"></div>
<div class="a" style="left:222px;top:418px;width:16px;height:15px;background:#d9d9d9;"></div>
<div class="a" style="left:238px;top:418px;width:16px;height:15px;background:#dbdbdb;"></div>
<div class="a" style="left:254px;top:418px;width:16px;height:15px;background:#d2d2d2;"></div>
<div class="a" style="left:270px;top:418px;width:16px;height:15px;background:#d6d6d6;"></div>
<div class="a" style="left:286px;top:418px;width:16px;height:15px;background:#dddddd;"></div>
<div class="a" style="left:302px;top:418px;width:16px;height:15px;background:#d3d3d3;"></div>
<div class="a" style="left:318px;top:418px;width:16px;height:15px;background:#d7d7d7;"></div>
<div class="a" style="left:334px;top:418px;width:16px;height:15px;background:#d1d1d1;"></div>
<div class="a" style="left:350px;top:418px;width:16px;height:15px;background:#d8d8d8;"></div>
<div class="a" style="left:366px;top:418px;width:16px;height:15px;background:#d6d6d6;"></div>
<div class="a" style="left:382px;top:418px;width:16px;height:15px;background:#f3f3f3;"></div>
<div class="a" style="left:303px;top:433px;width:32px;height:12px;background:#fafafa;"></div>
<div class="a" style="left:66px;top:453px;width:402px;height:40px;background:#f3eac4;"></div>
<div class="a" style="left:66px;top:531px;width:402px;height:21px;background:#f3eac4;"></div>
<div class="a" style="left:66px;top:453px;width:403px;height:1px;background:#cbbd85;"></div>
<div class="a" style="left:66px;top:493px;width:403px;height:1px;background:#cbbd85;"></div>
<div class="a" style="left:66px;top:512px;width:403px;height:1px;background:#cbbd85;"></div>
<div class="a" style="left:66px;top:531px;width:403px;height:1px;background:#cbbd85;"></div>
<div class="a" style="left:66px;top:552px;width:403px;height:1px;background:#cbbd85;"></div>
<div class="a" style="left:66px;top:453px;width:1px;height:100px;background:#cbbd85;"></div>
<div class="a" style="left:109px;top:453px;width:1px;height:100px;background:#cbbd85;"></div>
<div class="a" style="left:258px;top:453px;width:1px;height:100px;background:#cbbd85;"></div>
<div class="a" style="left:398px;top:453px;width:1px;height:100px;background:#cbbd85;"></div>
<div class="a" style="left:468px;top:453px;width:1px;height:100px;background:#cbbd85;"></div>
<div class="a" style="left:109px;top:532px;width:1px;height:20px;background:#f3eac4;"></div>
<div class="t" style="top:455.20px;font-size:15.30px;line-height:19px;color:#333;left:69.5px;">№</div>
<div class="t" style="top:473.70px;font-size:15.30px;line-height:19px;color:#333;left:69.5px;">п/п</div>
<div class="t" style="top:455.20px;font-size:15.30px;line-height:19px;color:#333;left:113px;">Наименование</div>
<div class="t" style="top:473.70px;font-size:15.30px;line-height:19px;color:#333;left:113px;">интервала</div>
<div class="t" style="top:455.20px;font-size:15.30px;line-height:19px;color:#333;left:262px;">Долг клиента</div>
<div class="t" style="top:455.20px;font-size:15.30px;line-height:19px;color:#333;left:402px;">%</div>
<div class="t" style="top:494.03px;font-size:14.35px;line-height:18px;color:#333;right:1692px;text-align:right;">1</div>
<div class="t" style="top:494.03px;font-size:14.35px;line-height:18px;color:#333;left:113px;">Не просрочено</div>
<div class="t" style="top:494.03px;font-size:14.35px;line-height:18px;color:#333;right:1402.5px;text-align:right;">679 175,91</div>
<div class="t" style="top:494.03px;font-size:14.35px;line-height:18px;color:#333;right:1332px;text-align:right;">99,7</div>
<div class="t" style="top:513.03px;font-size:14.35px;line-height:18px;color:#333;right:1692px;text-align:right;">2</div>
<div class="t" style="top:513.03px;font-size:14.35px;line-height:18px;color:#333;left:113px;">От 3 до 14 дней</div>
<div class="t" style="top:513.03px;font-size:14.35px;line-height:18px;color:#333;right:1402.5px;text-align:right;">1 758,27</div>
<div class="t" style="top:513.03px;font-size:14.35px;line-height:18px;color:#333;right:1332px;text-align:right;">0,3</div>
<div class="t" style="top:532.53px;font-size:15.80px;line-height:20px;color:#333;left:69.5px;">Итого</div>
<div class="t" style="top:532.53px;font-size:15.80px;line-height:20px;color:#333;right:1402.5px;text-align:right;">680 934,18</div>
<div class="t" style="top:532.53px;font-size:15.80px;line-height:20px;color:#333;right:1332px;text-align:right;">100,0</div>
<svg class="a" style="left:380px;top:456px;" width="19" height="14" viewBox="0 0 19 14"><path d="M4.0 3 V9.5" stroke="#0a5fb0" stroke-width="2"/><path d="M1.3 8.6 H7.7 L4.0 12.3 Z" fill="#0a5fb0"/><path d="M9 2.5 H17" stroke="#333" stroke-width="1.1"/><path d="M9 5.5 H15" stroke="#555" stroke-width="1.1"/><path d="M9 8.5 H13" stroke="#777" stroke-width="1.1"/><path d="M9 11.5 H11" stroke="#999" stroke-width="1.1"/></svg>
<div class="a" style="left:66px;top:569px;width:1480px;height:101px;background:#f3eac4;"></div>
<div class="a" style="left:66px;top:670px;width:1480px;height:19px;background:#f7f0da;"></div>
<div class="a" style="left:66px;top:785px;width:1480px;height:20px;background:#f3eac4;"></div>
<div class="a" style="left:136px;top:709px;width:569px;height:18px;background:#efefef;"></div>
<div class="a" style="left:66px;top:569px;width:1480px;height:1px;background:#cbbd85;"></div>
<div class="a" style="left:66px;top:590px;width:1480px;height:1px;background:#cbbd85;"></div>
<div class="a" style="left:705px;top:611px;width:561px;height:1px;background:#cbbd85;"></div>
<div class="a" style="left:66px;top:670px;width:1480px;height:1px;background:#cbbd85;"></div>
<div class="a" style="left:66px;top:689px;width:1480px;height:1px;background:#cbbd85;"></div>
<div class="a" style="left:66px;top:708px;width:1480px;height:1px;background:#cbbd85;"></div>
<div class="a" style="left:66px;top:727px;width:1480px;height:1px;background:#cbbd85;"></div>
<div class="a" style="left:66px;top:746px;width:1480px;height:1px;background:#cbbd85;"></div>
<div class="a" style="left:66px;top:765px;width:1480px;height:1px;background:#cbbd85;"></div>
<div class="a" style="left:66px;top:784px;width:1480px;height:1px;background:#cbbd85;"></div>
<div class="a" style="left:66px;top:805px;width:1480px;height:1px;background:#cbbd85;"></div>
<div class="a" style="left:66px;top:569px;width:1px;height:237px;background:#cbbd85;"></div>
<div class="a" style="left:136px;top:569px;width:1px;height:216px;background:#cbbd85;"></div>
<div class="a" style="left:705px;top:569px;width:1px;height:237px;background:#cbbd85;"></div>
<div class="a" style="left:845px;top:611px;width:1px;height:195px;background:#cbbd85;"></div>
<div class="a" style="left:915px;top:611px;width:1px;height:195px;background:#cbbd85;"></div>
<div class="a" style="left:1055px;top:611px;width:1px;height:195px;background:#cbbd85;"></div>
<div class="a" style="left:1125px;top:611px;width:1px;height:195px;background:#cbbd85;"></div>
<div class="a" style="left:1265px;top:590px;width:1px;height:216px;background:#cbbd85;"></div>
<div class="a" style="left:1405px;top:590px;width:1px;height:216px;background:#cbbd85;"></div>
<div class="a" style="left:1545px;top:569px;width:1px;height:237px;background:#cbbd85;"></div>
<div class="t" style="top:570.33px;font-size:15.80px;line-height:20px;color:#333;left:69.5px;">№ п/п</div>
<div class="t" style="top:570.33px;font-size:15.80px;line-height:20px;color:#333;left:140.5px;">Клиент</div>
<div class="t" style="top:570.33px;font-size:15.80px;line-height:20px;color:#333;left:709.5px;">Состояние взаиморасчетов</div>
<div class="t" style="top:590.53px;font-size:15.80px;line-height:20px;color:#333;left:69.5px;">№ в</div>
<div class="t" style="top:610.03px;font-size:15.80px;line-height:20px;color:#333;left:69.5px;">группе</div>
<div class="t" style="top:590.53px;font-size:15.80px;line-height:20px;color:#333;left:140.5px;">Объект расчетов</div>
<div class="t" style="top:591.30px;font-size:15.00px;line-height:19px;color:#333;left:709.5px;">Долг клиента</div>
<div class="t" style="top:591.20px;font-size:15.30px;line-height:19px;color:#333;left:1269px;">Наш долг</div>
<div class="t" style="top:590.53px;font-size:15.80px;line-height:20px;color:#333;left:1409px;">К отгрузке</div>
<div class="t" style="top:611.89px;font-size:16.20px;line-height:20px;color:#333;left:709.5px;">Всего</div>
<div class="t" style="top:612.03px;font-size:15.80px;line-height:20px;color:#333;left:849px;">Доля</div>
<div class="t" style="top:631.53px;font-size:15.80px;line-height:20px;color:#333;left:849px;">долга,</div>
<div class="t" style="top:650.03px;font-size:15.80px;line-height:20px;color:#333;left:849px;">%</div>
<div class="t" style="top:611.92px;font-size:16.10px;line-height:20px;color:#c0302c;left:919px;">Просрочено</div>
<div class="t" style="top:612.03px;font-size:15.80px;line-height:20px;color:#c0302c;left:1059px;">%</div>
<div class="t" style="top:612.03px;font-size:15.80px;line-height:20px;color:#333;left:1129px;">Дней</div>
<svg class="a" style="left:827px;top:614px;" width="19" height="14" viewBox="0 0 19 14"><path d="M4.0 3 V9.5" stroke="#0a5fb0" stroke-width="2"/><path d="M1.3 8.6 H7.7 L4.0 12.3 Z" fill="#0a5fb0"/><path d="M9 2.5 H17" stroke="#333" stroke-width="1.1"/><path d="M9 5.5 H15" stroke="#555" stroke-width="1.1"/><path d="M9 8.5 H13" stroke="#777" stroke-width="1.1"/><path d="M9 11.5 H11" stroke="#999" stroke-width="1.1"/></svg>
<svg class="a" style="left:1037px;top:614px;" width="19" height="14" viewBox="0 0 19 14"><path d="M4.0 3 V9.5" stroke="#0a5fb0" stroke-width="2"/><path d="M1.3 8.6 H7.7 L4.0 12.3 Z" fill="#0a5fb0"/><path d="M9 2.5 H17" stroke="#333" stroke-width="1.1"/><path d="M9 5.5 H15" stroke="#555" stroke-width="1.1"/><path d="M9 8.5 H13" stroke="#777" stroke-width="1.1"/><path d="M9 11.5 H11" stroke="#999" stroke-width="1.1"/></svg>
<svg class="a" style="left:1387px;top:593px;" width="19" height="14" viewBox="0 0 19 14"><path d="M4.0 3 V9.5" stroke="#0a5fb0" stroke-width="2"/><path d="M1.3 8.6 H7.7 L4.0 12.3 Z" fill="#0a5fb0"/><path d="M9 2.5 H11" stroke="#999" stroke-width="1.1"/><path d="M9 5.5 H13" stroke="#777" stroke-width="1.1"/><path d="M9 8.5 H15" stroke="#555" stroke-width="1.1"/><path d="M9 11.5 H17" stroke="#333" stroke-width="1.1"/></svg>
<div class="a" style="left:126px;top:667px;width:16px;height:16px;background:#e9e2c8;"></div>
<div class="a" style="left:142px;top:667px;width:16px;height:16px;background:#d6cdb2;"></div>
<div class="a" style="left:158px;top:667px;width:16px;height:16px;background:#e3dcc4;"></div>
<div class="a" style="left:174px;top:667px;width:16px;height:16px;background:#d8d0b6;"></div>
<div class="a" style="left:190px;top:667px;width:16px;height:16px;background:#dcd4ba;"></div>
<div class="a" style="left:206px;top:667px;width:16px;height:16px;background:#ebe6d0;"></div>
<div class="a" style="left:222px;top:667px;width:8px;height:20px;background:#f3eedd;"></div>
<div class="a" style="left:142px;top:683px;width:16px;height:4px;background:#c8c0ab;"></div>
<div class="a" style="left:36px;top:674px;width:13px;height:13px;box-sizing:border-box;border:1px solid #a0a0a0;background:#fff;"></div>
<div class="a" style="left:39px;top:680px;width:7px;height:1px;background:#555;"></div>
<div class="a" style="left:42px;top:687px;width:1px;height:98px;background:#909090;"></div>
<div class="a" style="left:42px;top:784px;width:23px;height:1px;background:#909090;"></div>
<div class="t" style="top:670.03px;font-size:14.35px;line-height:18px;color:#333;right:955.5px;text-align:right;">680 934,18</div>
<div class="t" style="top:670.03px;font-size:14.35px;line-height:18px;color:#333;right:885.5px;text-align:right;">100,0</div>
<div class="t" style="top:670.03px;font-size:14.35px;line-height:18px;color:#c0302c;right:745.5px;text-align:right;">1 758,27</div>
<div class="t" style="top:670.03px;font-size:14.35px;line-height:18px;color:#c0302c;right:675.5px;text-align:right;">0,3</div>
<div class="t" style="top:670.03px;font-size:14.35px;line-height:18px;color:#333;right:535.5px;text-align:right;">7</div>
<div class="t" style="top:689.83px;font-size:14.35px;line-height:18px;color:#333;right:1664.5px;text-align:right;">1</div>
<div class="t" style="top:689.83px;font-size:14.35px;line-height:18px;color:#333;left:158.5px;">Реализация товаров и услуг</div>
<div class="t" style="top:689.83px;font-size:14.35px;line-height:18px;color:#333;left:462px;">14.02.2022 9:25:10</div>
<div class="t" style="top:689.83px;font-size:14.35px;line-height:18px;color:#333;right:955.5px;text-align:right;">1 758,27</div>
<div class="t" style="top:689.83px;font-size:14.35px;line-height:18px;color:#333;right:885.5px;text-align:right;">0,3</div>
<div class="t" style="top:689.83px;font-size:14.35px;line-height:18px;color:#c0302c;right:745.5px;text-align:right;">1 758,27</div>
<div class="t" style="top:689.83px;font-size:14.35px;line-height:18px;color:#c0302c;right:675.5px;text-align:right;">100,0</div>
<div class="t" style="top:689.83px;font-size:14.35px;line-height:18px;color:#333;right:535.5px;text-align:right;">7</div>
<div class="t" style="top:709.03px;font-size:14.35px;line-height:18px;color:#333;right:1664.5px;text-align:right;">2</div>
<div class="t" style="top:709.03px;font-size:14.35px;line-height:18px;color:#333;left:158.5px;">Реализация товаров и услуг</div>
<div class="t" style="top:709.03px;font-size:14.35px;line-height:18px;color:#333;left:462px;">02.03.2022 8:13:17</div>
<div class="t" style="top:709.03px;font-size:14.35px;line-height:18px;color:#333;right:955.5px;text-align:right;">346 704,18</div>
<div class="t" style="top:709.03px;font-size:14.35px;line-height:18px;color:#333;right:885.5px;text-align:right;">50,9</div>
<div class="t" style="top:727.93px;font-size:14.35px;line-height:18px;color:#333;right:1664.5px;text-align:right;">3</div>
<div class="t" style="top:727.93px;font-size:14.35px;line-height:18px;color:#333;left:158.5px;">Реализация товаров и услуг</div>
<div class="t" style="top:727.93px;font-size:14.35px;line-height:18px;color:#333;left:462px;">24.02.2022 10:03:16</div>
<div class="t" style="top:727.93px;font-size:14.35px;line-height:18px;color:#333;right:955.5px;text-align:right;">262 598,40</div>
<div class="t" style="top:727.93px;font-size:14.35px;line-height:18px;color:#333;right:885.5px;text-align:right;">38,6</div>
<div class="t" style="top:746.83px;font-size:14.35px;line-height:18px;color:#333;right:1664.5px;text-align:right;">4</div>
<div class="t" style="top:746.83px;font-size:14.35px;line-height:18px;color:#333;left:158.5px;">Реализация товаров и услуг</div>
<div class="t" style="top:746.83px;font-size:14.35px;line-height:18px;color:#333;left:462px;">09.03.2022 12:39:22</div>
<div class="t" style="top:746.83px;font-size:14.35px;line-height:18px;color:#333;right:955.5px;text-align:right;">36 068,00</div>
<div class="t" style="top:746.83px;font-size:14.35px;line-height:18px;color:#333;right:885.5px;text-align:right;">5,3</div>
<div class="t" style="top:765.83px;font-size:14.35px;line-height:18px;color:#333;right:1664.5px;text-align:right;">5</div>
<div class="t" style="top:765.83px;font-size:14.35px;line-height:18px;color:#333;left:158.5px;">Реализация товаров и услуг</div>
<div class="t" style="top:765.83px;font-size:14.35px;line-height:18px;color:#333;left:462px;">05.03.2022 15:19:43</div>
<div class="t" style="top:765.83px;font-size:14.35px;line-height:18px;color:#333;right:955.5px;text-align:right;">33 805,33</div>
<div class="t" style="top:765.83px;font-size:14.35px;line-height:18px;color:#333;right:885.5px;text-align:right;">5,0</div>
<div class="a" style="left:349px;top:690px;width:16px;height:16px;background:#d9d5ca;"></div>
<div class="a" style="left:365px;top:690px;width:16px;height:16px;background:#dcd8cd;"></div>
<div class="a" style="left:381px;top:690px;width:16px;height:16px;background:#e2dfd2;"></div>
<div class="a" style="left:397px;top:690px;width:16px;height:16px;background:#dad6c9;"></div>
<div class="a" style="left:413px;top:690px;width:16px;height:16px;background:#e4e1d5;"></div>
<div class="a" style="left:429px;top:690px;width:16px;height:16px;background:#e0ddd1;"></div>
<div class="a" style="left:445px;top:690px;width:16px;height:16px;background:#dddad0;"></div>
<div class="a" style="left:349px;top:706px;width:16px;height:16px;background:#d5cfc0;"></div>
<div class="a" style="left:365px;top:706px;width:16px;height:16px;background:#d8d2c2;"></div>
<div class="a" style="left:381px;top:706px;width:16px;height:16px;background:#d4cebf;"></div>
<div class="a" style="left:397px;top:706px;width:16px;height:16px;background:#d2ccbd;"></div>
<div class="a" style="left:413px;top:706px;width:16px;height:16px;background:#d6d0c1;"></div>
<div class="a" style="left:429px;top:706px;width:16px;height:16px;background:#d3cdbe;"></div>
<div class="a" style="left:445px;top:706px;width:16px;height:16px;background:#d8d3c5;"></div>
<div class="a" style="left:349px;top:722px;width:16px;height:16px;background:#ddd5bb;"></div>
<div class="a" style="left:365px;top:722px;width:16px;height:16px;background:#d9d0b4;"></div>
<div class="a" style="left:381px;top:722px;width:16px;height:16px;background:#e3dcc2;"></div>
<div class="a" style="left:397px;top:722px;width:16px;height:16px;background:#dcd4ba;"></div>
<div class="a" style="left:413px;top:722px;width:16px;height:16px;background:#ded7bd;"></div>
<div class="a" style="left:429px;top:722px;width:16px;height:16px;background:#e2dbc1;"></div>
<div class="a" style="left:445px;top:722px;width:16px;height:16px;background:#e0d9c0;"></div>
<div class="a" style="left:349px;top:738px;width:16px;height:16px;background:#dedede;"></div>
<div class="a" style="left:365px;top:738px;width:16px;height:16px;background:#e0e0e0;"></div>
<div class="a" style="left:381px;top:738px;width:16px;height:16px;background:#e3e3e3;"></div>
<div class="a" style="left:397px;top:738px;width:16px;height:16px;background:#dfdfdf;"></div>
<div class="a" style="left:413px;top:738px;width:16px;height:16px;background:#e1e1e1;"></div>
<div class="a" style="left:429px;top:738px;width:16px;height:16px;background:#e6e6e6;"></div>
<div class="a" style="left:445px;top:738px;width:16px;height:16px;background:#e3e3e3;"></div>
<div class="a" style="left:349px;top:754px;width:16px;height:16px;background:#e2e2e2;"></div>
<div class="a" style="left:365px;top:754px;width:16px;height:16px;background:#e0e0e0;"></div>
<div class="a" style="left:381px;top:754px;width:16px;height:16px;background:#e5e5e5;"></div>
<div class="a" style="left:397px;top:754px;width:16px;height:16px;background:#e2e2e2;"></div>
<div class="a" style="left:413px;top:754px;width:16px;height:16px;background:#e8e8e8;"></div>
<div class="a" style="left:429px;top:754px;width:16px;height:16px;background:#e4e4e4;"></div>
<div class="a" style="left:445px;top:754px;width:16px;height:16px;background:#e6e6e6;"></div>
<div class="a" style="left:349px;top:770px;width:16px;height:10px;background:#bdbdc0;"></div>
<div class="a" style="left:365px;top:770px;width:16px;height:10px;background:#c2c2c5;"></div>
<div class="a" style="left:381px;top:770px;width:16px;height:10px;background:#cdcdd0;"></div>
<div class="a" style="left:397px;top:770px;width:16px;height:10px;background:#bbbbbe;"></div>
<div class="a" style="left:413px;top:770px;width:16px;height:10px;background:#c4c4c7;"></div>
<div class="a" style="left:429px;top:770px;width:16px;height:10px;background:#d9d9dc;"></div>
<div class="a" style="left:445px;top:770px;width:16px;height:10px;background:#c9c9cc;"></div>
<div class="a" style="left:461px;top:690px;width:1px;height:90px;background:transparent;"></div>
<div class="a" style="left:133px;top:705px;width:576px;height:25px;box-sizing:border-box;border:2px solid #f7c100;"></div>
<div class="t" style="top:785.53px;font-size:15.80px;line-height:20px;color:#333;left:69.5px;">Итого</div>
<div class="t" style="top:785.53px;font-size:15.80px;line-height:20px;color:#333;right:955px;text-align:right;">680 934,18</div>
<div class="t" style="top:785.53px;font-size:15.80px;line-height:20px;color:#333;right:885px;text-align:right;">100,0</div>
<div class="t" style="top:785.53px;font-size:15.80px;line-height:20px;color:#c0302c;right:745px;text-align:right;">1 758,27</div>
<div class="t" style="top:785.53px;font-size:15.80px;line-height:20px;color:#c0302c;right:675px;text-align:right;">0,3</div>
<div class="t" style="top:785.53px;font-size:15.80px;line-height:20px;color:#333;right:535px;text-align:right;">7</div>
<svg class="a" style="left:1180px;top:300px;" width="170" height="280" viewBox="0 0 170 280"><rect x="12.5" y="12.5" width="144" height="203.5" rx="5" fill="#fff" stroke="#3a78bd" stroke-width="5"/><rect x="10" y="120.5" width="5" height="37" fill="#d6e3f1"/><rect x="154" y="120.5" width="5" height="37" fill="#d6e3f1"/><path d="M83 220 L83.6 248" stroke="#3a78bd" stroke-width="4.2"/><path d="M69 244.5 L83.5 247 L97.3 244.5 L83.7 271.5 Z" fill="#3a78bd"/></svg>
<div class="t" style="top:425.86px;font-size:20.60px;line-height:26px;color:#2a2a2a;letter-spacing:0.25px;left:1198.5px;">дата платежа</div>
<svg class="a" style="left:43px;top:932px;" width="8" height="9" viewBox="0 0 8 9"><path d="M1.5 4.5 L6 1.8 L6 7.2 Z" fill="#b4b4b4"/></svg>
<div class="a" style="left:1682px;top:931px;width:115px;height:10px;background:#d6d6d6;"></div>
<div class="a" style="left:61px;top:931px;width:1621px;height:10px;background:#9b9b9b;border-radius:5px;"></div>
<div class="a" style="left:0px;top:962px;width:1797px;height:20px;background:#b0b0b0;"></div>
<div class="a" style="left:17px;top:960px;width:1780px;height:2px;background:#a2a2a2;"></div>
<div class="a" style="left:0px;top:982px;width:1797px;height:1px;background:#f4f4f4;"></div>
<div class="a" style="left:0px;top:983px;width:1713px;height:19px;background:#cdcdcd;"></div>
<div class="a" style="left:0px;top:1002px;width:1797px;height:1px;background:#f2f2f2;"></div>
<div class="a" style="left:1713px;top:983px;width:84px;height:19px;background:#f0f0f0;"></div>
<div class="a" style="left:0px;top:1003px;width:1797px;height:2px;background:#858585;"></div>
<div class="a" style="left:0;top:960px;width:1797px;height:22px;overflow:hidden;"><div class="t" style="left:-1px;top:9.8px;font-size:15.6px;line-height:19px;color:#f00;">Текущие вызовы: 37&nbsp;&nbsp; Накопленные вызовы: 14 368</div></div>
<svg class="a" style="left:1787px;top:985px;" width="10" height="16" viewBox="0 0 10 16"><path d="M2 2 L8 8 L2 14" fill="none" stroke="#555" stroke-width="2"/></svg>
</body></html>
